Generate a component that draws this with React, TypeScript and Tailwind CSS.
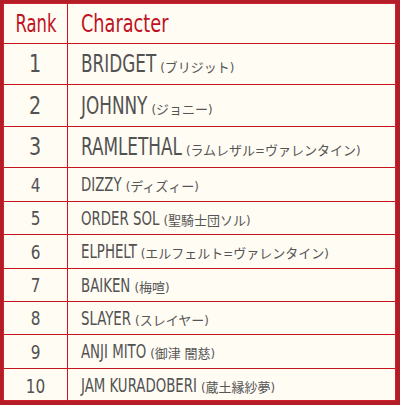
import React, { useLayoutEffect, useRef, useState } from "react";

const rows = [
  { rank: "1", name: "BRIDGET", jp: "(ブリジット)", big: true },
  { rank: "2", name: "JOHNNY", jp: "(ジョニー)", big: true },
  { rank: "3", name: "RAMLETHAL", jp: "(ラムレザル=ヴァレンタイン)", big: true },
  { rank: "4", name: "DIZZY", jp: "(ディズィー)" },
  { rank: "5", name: "ORDER SOL", jp: "(聖騎士団ソル)" },
  { rank: "6", name: "ELPHELT", jp: "(エルフェルト=ヴァレンタイン)" },
  { rank: "7", name: "BAIKEN", jp: "(梅喧)" },
  { rank: "8", name: "SLAYER", jp: "(スレイヤー)" },
  { rank: "9", name: "ANJI MITO", jp: "(御津 闇慈)" },
  { rank: "10", name: "JAM KURADOBERI", jp: "(蔵土縁紗夢)" },
];

const heights = ["h-[41px]", "h-[42px]", "h-[41px]", "h-[34px]", "h-[33px]", "h-[34px]", "h-[33px]", "h-[33px]", "h-[34px]", "h-[33px]"];

// condensed look: squeeze horizontally and give back the lost width
const Narrow = ({ children, className = "", s = 0.8 }: { children: React.ReactNode; className?: string; s?: number }) => {
  const ref = useRef<HTMLSpanElement>(null);
  const [w, setW] = useState(0);
  useLayoutEffect(() => {
    if (ref.current) setW(ref.current.offsetWidth);
  }, []);
  return (
    <span
      ref={ref}
      className={`inline-block origin-left whitespace-nowrap ${className}`}
      style={{ transform: `scaleX(${s})`, marginRight: -w * (1 - s) }}
    >
      {children}
    </span>
  );
};

const App = () => {
  return (
    <div
      className="w-[400px] h-[405px] bg-[#b31d27] pt-[3px] pl-[3px] pr-[4px] pb-[4px]"
      style={{ fontFamily: '"DejaVu Sans Condensed", "Liberation Sans", "Noto Sans CJK JP", sans-serif' }}
    >
      <div className="h-full border border-[#d0202b] bg-[#fffcf4] flex flex-col">
        {/* header */}
        <div className="flex h-[40px] border-b border-[#c8141f] text-[#c0121e] text-[24px] shrink-0">
          <div className="w-[64px] border-r border-[#c8141f] flex items-center justify-center">
            <span className="inline-block scale-x-[0.76]">Rank</span>
          </div>
          <div className="flex-1 flex items-center pl-[13px]">
            <Narrow s={0.82}>Character</Narrow>
          </div>
        </div>

        {rows.map((r, i) => (
          <div
            key={r.rank}
            className={`flex shrink-0 text-[#525252] ${heights[i]} ${i < rows.length - 1 ? "border-b border-[#c8141f]" : ""}`}
          >
            <div
              className={`w-[64px] border-r border-[#c8141f] flex items-center justify-center ${r.big ? "text-[25px]" : "text-[20px]"}`}
            >
              <span className="inline-block scale-x-[0.85]">{r.rank}</span>
            </div>
            <div className="flex-1 flex items-center pl-[13px]">
              <div className="flex items-baseline whitespace-nowrap">
                <Narrow s={r.big ? 0.78 : 0.78} className={r.big ? "text-[24px]" : "text-[19px]"}>
                  {r.name}
                </Narrow>
                <span className="ml-[4px] text-[13px] text-[#555]">{r.jp}</span>
              </div>
            </div>
          </div>
        ))}
      </div>
    </div>
  );
};

export default App;
